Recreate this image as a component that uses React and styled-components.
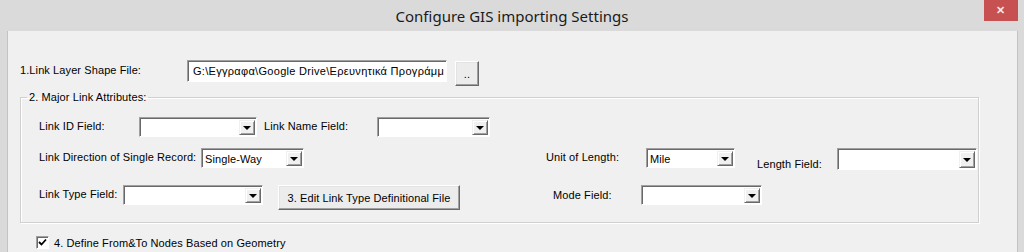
import React from 'react';
import styled, { createGlobalStyle } from 'styled-components';

const GlobalStyle = createGlobalStyle`
  html, body {
    margin: 0;
    padding: 0;
    background: #dadada;
  }
`;

const App = () => {
  return (
    <Window>
      <GlobalStyle />
      <TitleBar>
        <span />
        <Title>Configure GIS importing Settings</Title>
        <CloseButton>✕</CloseButton>
      </TitleBar>
      <Body>
        <Row top={29}>
          <Label w={167} pad={2}>1.Link Layer Shape File:</Label>
          <TextInput>G:\Εγγραφα\Google Drive\Ερευνητικά Προγράμμ</TextInput>
          <Button w={24} h={25} ml={8} mt={1}>..</Button>
        </Row>

        <Group>
          <Legend>2. Major Link Attributes:</Legend>
          <GroupRow top={13}>
            <Label w={100} pad={1}>Link ID Field:</Label>
            <Combo w={118} />
            <Label w={113} ml={7} pad={1}>Link Name Field:</Label>
            <Combo w={113} />
          </GroupRow>
          <GroupRow top={11}>
            <Label w={162} pad={1}>Link Direction of Single Record:</Label>
            <Combo w={103} value="Single-Way" />
            <Label w={100} ml={242} pad={1}>Unit of Length:</Label>
            <Combo w={89} value="Mile" />
            <Label w={80} ml={22} pad={8}>Length Field:</Label>
            <Combo w={140} h={22} />
          </GroupRow>
          <GroupRow top={14}>
            <Label w={84} pad={1}>Link Type Field:</Label>
            <Combo w={140} />
            <Button w={182} h={25} ml={15}>3. Edit Link Type Definitional File</Button>
            <Label w={88} ml={93} pad={2}>Mode Field:</Label>
            <Combo w={121} />
          </GroupRow>
        </Group>

        <CheckRow>
          <CheckBox>
            <svg width="9" height="9" viewBox="0 0 9 9">
              <path d="M1 4 L3.5 6.5 L8 1.5" stroke="#000" strokeWidth="1.8" fill="none" />
            </svg>
          </CheckBox>
          <span>4. Define From&amp;To Nodes Based on Geometry</span>
        </CheckRow>
      </Body>
    </Window>
  );
};

const Combo = ({ w, h = 20, value }) => (
  <ComboBox w={w} h={h}>
    <ComboText>{value}</ComboText>
    <ComboArrow>
      <Triangle />
    </ComboArrow>
  </ComboBox>
);

const Window = styled.div`
  width: 1024px;
  height: 252px;
  overflow: hidden;
  background: #dadada;
  display: flex;
  flex-direction: column;
  font-family: "Liberation Sans", Arial, sans-serif;
  font-size: 11px;
  letter-spacing: 0.1px;
  color: #000;
`;

const TitleBar = styled.div`
  height: 31px;
  flex-shrink: 0;
  display: grid;
  grid-template-columns: 1fr auto 1fr;
  align-items: start;
`;

const Title = styled.div`
  font-family: "Noto Sans", "Open Sans", sans-serif;
  font-size: 15px;
  letter-spacing: 0;
  line-height: 31px;
  color: #1a1a1a;
  padding-top: 1px;
`;

const CloseButton = styled.div`
  justify-self: end;
  width: 34px;
  height: 21px;
  margin-right: 6px;
  background: #c75050;
  color: #f4e4e4;
  font-size: 11px;
  font-weight: bold;
  display: flex;
  align-items: center;
  justify-content: center;
`;

const Body = styled.div`
  flex: 1;
  margin: 0 6px 0 7px;
  border-left: 1px solid #c3c3c3;
  border-right: 1px solid #c3c3c3;
  background: #f0f0f0;
  padding-left: 12px;
  display: flex;
  flex-direction: column;
`;

const Row = styled.div`
  display: flex;
  align-items: flex-start;
  margin-top: ${({ top }) => top}px;
`;

const Label = styled.div`
  width: ${({ w }) => w}px;
  margin-left: ${({ ml = 0 }) => ml}px;
  padding-top: ${({ pad = 3 }) => pad + 2}px;
  flex-shrink: 0;
  white-space: nowrap;
  line-height: 13px;
`;

const TextInput = styled.div`
  width: 260px;
  height: 22px;
  box-sizing: border-box;
  background: #fff;
  border-top: 1px solid #a0a0a0;
  border-left: 1px solid #a0a0a0;
  border-right: 1px solid #fff;
  border-bottom: 1px solid #fff;
  box-shadow: inset 1px 1px 0 #696969;
  padding: 0 2px 0 5px;
  line-height: 20px;
  letter-spacing: 0.3px;
  white-space: nowrap;
  overflow: hidden;
`;

const Button = styled.div`
  width: ${({ w }) => w}px;
  height: ${({ h }) => h}px;
  margin-left: ${({ ml = 0 }) => ml}px;
  margin-top: ${({ mt = 0 }) => mt}px;
  box-sizing: border-box;
  background: #ececec;
  border-top: 1px solid #fff;
  border-left: 1px solid #fff;
  border-right: 1px solid #696969;
  border-bottom: 1px solid #696969;
  box-shadow: inset -1px -1px 0 #a0a0a0, inset 1px 1px 0 #e3e3e3;
  display: flex;
  align-items: center;
  justify-content: center;
  white-space: nowrap;
  flex-shrink: 0;
`;

const Group = styled.fieldset`
  width: 959px;
  box-sizing: border-box;
  margin: 4px 0 0 0;
  padding: 0 0 0 18px;
  height: 133px;
  border: 1px solid #d0d0d0;
  box-shadow: inset 1px 1px 0 #fff, 1px 1px 0 #fff;
  display: flex;
  flex-direction: column;
`;

const Legend = styled.legend`
  padding: 0 2px;
  margin-left: -12px;
  line-height: 14px;
`;

const GroupRow = styled.div`
  display: flex;
  align-items: flex-start;
  margin-top: ${({ top }) => top}px;
`;

const ComboBox = styled.div`
  width: ${({ w }) => w}px;
  height: ${({ h }) => h}px;
  flex-shrink: 0;
  box-sizing: border-box;
  background: #fff;
  border-top: 1px solid #a0a0a0;
  border-left: 1px solid #a0a0a0;
  border-right: 1px solid #fff;
  border-bottom: 1px solid #fff;
  box-shadow: inset 1px 1px 0 #696969;
  display: flex;
  padding: 2px 1px 1px 2px;
`;

const ComboText = styled.div`
  flex: 1;
  line-height: 15px;
  padding-left: 1px;
  padding-top: 1px;
  white-space: nowrap;
  overflow: hidden;
`;

const ComboArrow = styled.div`
  width: 16px;
  box-sizing: border-box;
  background: #f0f0f0;
  border-top: 1px solid #f0f0f0;
  border-left: 1px solid #f0f0f0;
  border-right: 1px solid #696969;
  border-bottom: 1px solid #696969;
  box-shadow: inset 1px 1px 0 #fff, inset -1px -1px 0 #a0a0a0;
  display: flex;
  align-items: center;
  justify-content: center;
`;

const Triangle = styled.div`
  width: 0;
  height: 0;
  border-left: 4px solid transparent;
  border-right: 4px solid transparent;
  border-top: 4px solid #000;
  margin-top: 1px;
`;

const CheckRow = styled.div`
  display: flex;
  align-items: center;
  margin: 13px 0 0 16px;
  gap: 5px;
`;

const CheckBox = styled.div`
  width: 13px;
  height: 13px;
  box-sizing: border-box;
  background: #fff;
  border-top: 1px solid #a0a0a0;
  border-left: 1px solid #a0a0a0;
  border-right: 1px solid #fff;
  border-bottom: 1px solid #fff;
  box-shadow: inset 1px 1px 0 #696969;
  display: flex;
  align-items: center;
  justify-content: center;
`;

export default App;
